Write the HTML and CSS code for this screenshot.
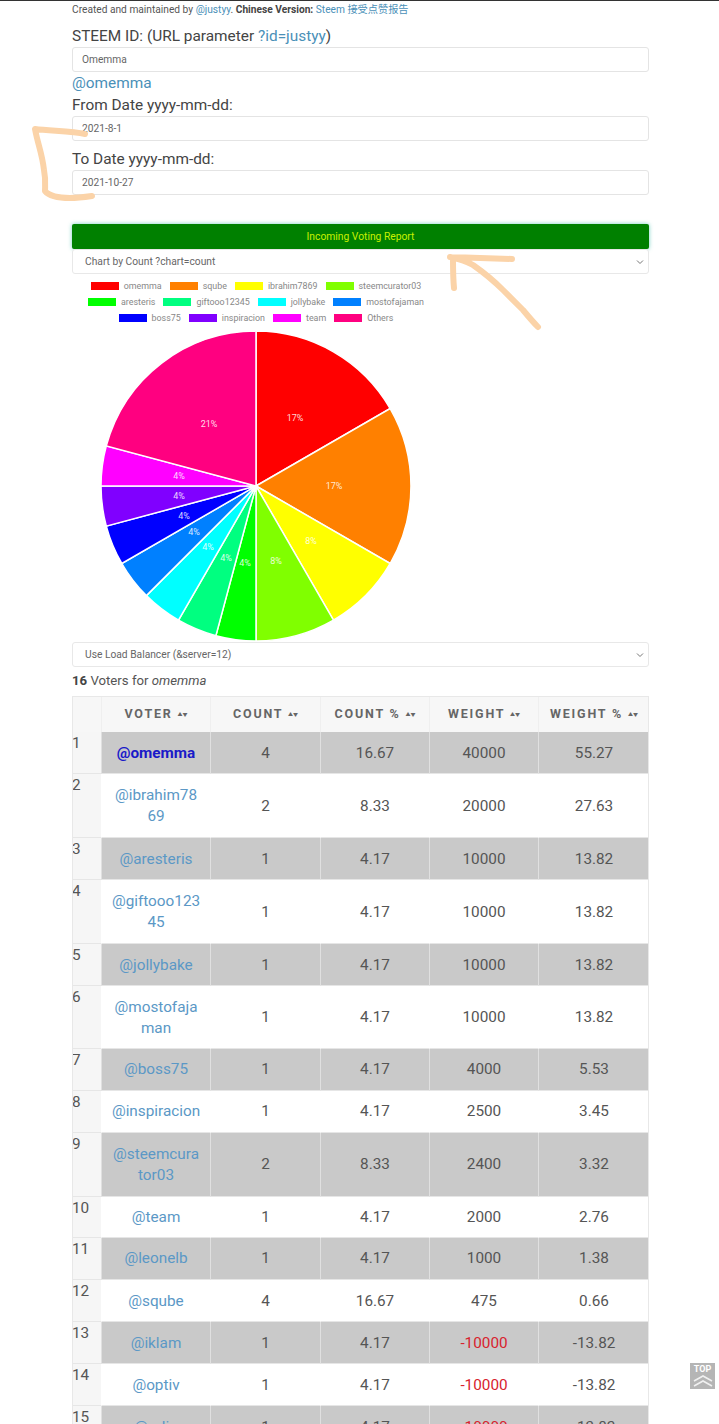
FILE: index.html
```html
<!DOCTYPE html>
<html lang="en">
<head>
    <meta charset="UTF-8">
    <meta name="viewport" content="width=device-width, initial-scale=1.0">
    <title>Steem Incoming Voting Report</title>
    <link rel="stylesheet" href="styles.css">
</head>
<body>
    <div class="page">
        <p class="credit">Created and maintained by <a href="#">@justyy</a>. <b>Chinese Version:</b> <a href="#">Steem 接受点赞报告</a></p>

        <div class="field-label">STEEM ID: (URL parameter <a href="#">?id=justyy</a>)</div>
        <input class="text-input" type="text" value="Omemma">
        <div class="field-label"><a href="#">@omemma</a></div>
        <div class="field-label">From Date yyyy-mm-dd:</div>
        <input class="text-input" type="text" value="2021-8-1">
        <div class="field-label to-date">To Date yyyy-mm-dd:</div>
        <input class="text-input" type="text" value="2021-10-27">

        <button class="report-btn">Incoming Voting Report</button>
        <select class="picker">
            <option>Chart by Count ?chart=count</option>
        </select>

        <div class="chart">
            <div class="legend">
                <div class="legend-row">
                    <span class="legend-item"><i class="swatch" style="background:#ff0000"></i>omemma</span>
                    <span class="legend-item"><i class="swatch" style="background:#ff8000"></i>sqube</span>
                    <span class="legend-item"><i class="swatch" style="background:#ffff00"></i>ibrahim7869</span>
                    <span class="legend-item"><i class="swatch" style="background:#80ff00"></i>steemcurator03</span>
                </div>
                <div class="legend-row">
                    <span class="legend-item"><i class="swatch" style="background:#00ff00"></i>aresteris</span>
                    <span class="legend-item"><i class="swatch" style="background:#00ff80"></i>giftooo12345</span>
                    <span class="legend-item"><i class="swatch" style="background:#00ffff"></i>jollybake</span>
                    <span class="legend-item"><i class="swatch" style="background:#0080ff"></i>mostofajaman</span>
                </div>
                <div class="legend-row">
                    <span class="legend-item"><i class="swatch" style="background:#0000ff"></i>boss75</span>
                    <span class="legend-item"><i class="swatch" style="background:#8000ff"></i>inspiracion</span>
                    <span class="legend-item"><i class="swatch" style="background:#ff00ff"></i>team</span>
                    <span class="legend-item"><i class="swatch" style="background:#ff0080"></i>Others</span>
                </div>
            </div>
            <svg class="pie" width="312" height="312" viewBox="-156 -156 312 312">
                <g stroke="#fff" stroke-width="1.5">
                    <path fill="#ff0000" d="M0 0L0 -155A155 155 0 0 1 134.2 -77.5Z"/>
                    <path fill="#ff8000" d="M0 0L134.2 -77.5A155 155 0 0 1 134.2 77.5Z"/>
                    <path fill="#ffff00" d="M0 0L134.2 77.5A155 155 0 0 1 77.5 134.2Z"/>
                    <path fill="#80ff00" d="M0 0L77.5 134.2A155 155 0 0 1 0 155Z"/>
                    <path fill="#00ff00" d="M0 0L0 155A155 155 0 0 1 -40.1 149.7Z"/>
                    <path fill="#00ff80" d="M0 0L-40.1 149.7A155 155 0 0 1 -77.5 134.2Z"/>
                    <path fill="#00ffff" d="M0 0L-77.5 134.2A155 155 0 0 1 -109.6 109.6Z"/>
                    <path fill="#0080ff" d="M0 0L-109.6 109.6A155 155 0 0 1 -134.2 77.5Z"/>
                    <path fill="#0000ff" d="M0 0L-134.2 77.5A155 155 0 0 1 -149.7 40.1Z"/>
                    <path fill="#8000ff" d="M0 0L-149.7 40.1A155 155 0 0 1 -155 0Z"/>
                    <path fill="#ff00ff" d="M0 0L-155 0A155 155 0 0 1 -149.7 -40.1Z"/>
                    <path fill="#ff0080" d="M0 0L-149.7 -40.1A155 155 0 0 1 0 -155Z"/>
                </g>
                <g class="pie-labels">
                    <text x="39" y="-65">17%</text>
                    <text x="78" y="3">17%</text>
                    <text x="55" y="58">8%</text>
                    <text x="20" y="78">8%</text>
                    <text x="-11" y="80">4%</text>
                    <text x="-30" y="75">4%</text>
                    <text x="-48" y="64">4%</text>
                    <text x="-62" y="49">4%</text>
                    <text x="-72" y="33">4%</text>
                    <text x="-77" y="13">4%</text>
                    <text x="-77" y="-7">4%</text>
                    <text x="-47" y="-59">21%</text>
                </g>
            </svg>
        </div>

        <select class="picker">
            <option>Use Load Balancer (&amp;server=12)</option>
        </select>

        <p class="voters"><b>16</b> Voters for <em>omemma</em></p>

        <table class="report">
            <colgroup>
                <col class="col-rank"><col class="col-voter"><col class="col-count"><col class="col-pct"><col class="col-weight"><col class="col-wpct">
            </colgroup>
            <thead>
                <tr>
                    <th></th>
                    <th>Voter <span class="sort">▲▼</span></th>
                    <th>Count <span class="sort">▲▼</span></th>
                    <th>Count % <span class="sort">▲▼</span></th>
                    <th>Weight <span class="sort">▲▼</span></th>
                    <th>Weight % <span class="sort">▲▼</span></th>
                </tr>
            </thead>
            <tbody>
                <tr><td>1</td><td><a class="self" href="#">@omemma</a></td><td>4</td><td>16.67</td><td>40000</td><td>55.27</td></tr>
                <tr><td>2</td><td><a href="#">@ibrahim7869</a></td><td>2</td><td>8.33</td><td>20000</td><td>27.63</td></tr>
                <tr><td>3</td><td><a href="#">@aresteris</a></td><td>1</td><td>4.17</td><td>10000</td><td>13.82</td></tr>
                <tr><td>4</td><td><a href="#">@giftooo12345</a></td><td>1</td><td>4.17</td><td>10000</td><td>13.82</td></tr>
                <tr><td>5</td><td><a href="#">@jollybake</a></td><td>1</td><td>4.17</td><td>10000</td><td>13.82</td></tr>
                <tr class="tight-two"><td>6</td><td><a href="#">@mostofajaman</a></td><td>1</td><td>4.17</td><td>10000</td><td>13.82</td></tr>
                <tr><td>7</td><td><a href="#">@boss75</a></td><td>1</td><td>4.17</td><td>4000</td><td>5.53</td></tr>
                <tr><td>8</td><td><a href="#">@inspiracion</a></td><td>1</td><td>4.17</td><td>2500</td><td>3.45</td></tr>
                <tr><td>9</td><td><a href="#">@steemcurator03</a></td><td>2</td><td>8.33</td><td>2400</td><td>3.32</td></tr>
                <tr class="tight-one"><td>10</td><td><a href="#">@team</a></td><td>1</td><td>4.17</td><td>2000</td><td>2.76</td></tr>
                <tr><td>11</td><td><a href="#">@leonelb</a></td><td>1</td><td>4.17</td><td>1000</td><td>1.38</td></tr>
                <tr><td>12</td><td><a href="#">@sqube</a></td><td>4</td><td>16.67</td><td>475</td><td>0.66</td></tr>
                <tr><td>13</td><td><a href="#">@iklam</a></td><td>1</td><td>4.17</td><td class="neg">-10000</td><td>-13.82</td></tr>
                <tr><td>14</td><td><a href="#">@optiv</a></td><td>1</td><td>4.17</td><td class="neg">-10000</td><td>-13.82</td></tr>
                <tr><td>15</td><td><a href="#">@odin</a></td><td>1</td><td>4.17</td><td class="neg">-10000</td><td>-13.82</td></tr>
            </tbody>
        </table>
    </div>

    <!-- hand drawn marks on top of the screenshot -->
    <svg class="scribble" width="719" height="1424" viewBox="0 0 719 1424">
        <path d="M85 134C72 131 50 131 35 129C38 145 42 153 44 170C46 180 45 186 45 191C50 197 60 198 70 198C78 198 85 197 92 196"/>
        <path d="M512 259L450 257M453 258C453 268 453 278 454 288M450 257C460 259 466 261 473 265C483 272 493 280 503 290C510 297 517 304 523 310C528 316 533 322 538 327"/>
    </svg>

    <a class="to-top" href="#">
        <span>TOP</span>
        <svg width="20" height="12" viewBox="0 0 20 12">
            <path d="M1 6L10 1L19 6M1 11L10 6L19 11"/>
        </svg>
    </a>
</body>
</html>
```

FILE: styles.css
```css
html, body {
    margin: 0;
    padding: 0;
    height: 1424px;
    overflow: hidden;
}

body {
    background: #fff;
    color: #444;
    font-family: Roboto, "Noto Sans CJK SC", sans-serif;
    border-top: 1px solid #333;
    box-sizing: border-box;
}

a {
    color: #4a90b8;
    text-decoration: none;
}

.page {
    width: 577px;
    margin-left: 72px;
}

.credit {
    margin: 0 0 6px;
    font-size: 10.2px;
    line-height: 18px;
    color: #555;
}

.credit b {
    color: #444;
}

.field-label {
    font-size: 15.4px;
    line-height: 22px;
    color: #444;
}

.to-date {
    margin-top: 7px;
}

.text-input {
    display: block;
    width: 100%;
    height: 25px;
    box-sizing: border-box;
    padding: 0 9px;
    border: 1px solid #e4e4e4;
    border-radius: 3px;
    background: #fff;
    color: #666;
    font-family: inherit;
    font-size: 10.2px;
}

.report-btn {
    display: block;
    width: 100%;
    height: 25px;
    margin-top: 29px;
    padding: 0;
    border: none;
    border-radius: 2px;
    background: #008000;
    color: #c8f000;
    font-family: inherit;
    font-size: 10.3px;
    box-shadow: 0 0 4px rgba(60, 190, 170, 0.7);
}

.picker {
    display: block;
    width: 100%;
    height: 25px;
    box-sizing: border-box;
    margin: 0;
    padding: 0 12px;
    border: 1px solid #e8e8e8;
    border-radius: 3px;
    appearance: none;
    background: #fff url("data:image/svg+xml,%3Csvg xmlns='http://www.w3.org/2000/svg' width='8' height='6'%3E%3Cpath d='M1 1.5L4 4.5L7 1.5' fill='none' stroke='%23777' stroke-width='1'/%3E%3C/svg%3E") no-repeat right 4px center;
    color: #666;
    font-family: inherit;
    font-size: 10.25px;
}

.chart {
    width: 368px;
    padding-top: 4px;
    display: flex;
    flex-direction: column;
    align-items: center;
}

.legend-row {
    display: flex;
    justify-content: center;
    gap: 8px;
    height: 16px;
    align-items: center;
}

.legend-item {
    display: flex;
    align-items: center;
    gap: 5px;
    font-size: 8.9px;
    color: #888;
}

.swatch {
    display: block;
    width: 28px;
    height: 8px;
}

.pie {
    display: block;
    margin-top: 4px;
}

.pie-labels text {
    fill: #fff;
    fill-opacity: 0.85;
    font-size: 9px;
    text-anchor: middle;
}

.voters {
    margin: 5px 0 6px;
    font-size: 13.2px;
    line-height: 18px;
    color: #555;
}

.voters b {
    color: #444;
}

.report {
    width: 577px;
    table-layout: fixed;
    border-collapse: separate;
    border-spacing: 0;
    outline: 1px solid #e8e8e8;
    outline-offset: -1px;
    font-size: 15.3px;
    color: #555;
}

.col-rank { width: 29px; }
.col-voter { width: 109px; }
.col-count { width: 110px; }
.col-pct { width: 109px; }
.col-weight { width: 109px; }
.col-wpct { width: auto; }

.report th {
    height: 36px;
    box-sizing: border-box;
    padding: 0 0 2px;
    background: #f7f7f7;
    border-top: 1px solid #e8e8e8;
    border-left: 1px solid #efefef;
    color: #666;
    font-size: 12.5px;
    font-weight: 700;
    letter-spacing: 1.8px;
    text-transform: uppercase;
    white-space: nowrap;
}

.report th:first-child {
    border-left: none;
}

.sort {
    font-size: 5px;
    letter-spacing: 0;
    vertical-align: 2px;
}

.report td {
    padding: 10.5px 9px 8.6px;
    line-height: 21.93px;
    text-align: center;
    word-break: break-all;
    border-bottom: 1px solid #e6e6e6;
    border-left: 1px solid #e0e0e0;
}

/* the reference rows drift by a pixel here */
.report .tight-two td {
    line-height: 21.4px;
}

.report .tight-one td {
    line-height: 20.9px;
}

.report td:first-child {
    padding: 1px 0 0 0;
    border-left: none;
    background: #f6f6f6;
    text-align: left;
    vertical-align: top;
}

.report tbody tr:nth-child(odd) td:not(:first-child) {
    background: #c9c9c9;
}

.report tbody tr:nth-child(even) td:not(:first-child) {
    border-left-color: #fff;
}

.report a {
    color: #5b98c6;
}

.report a.self {
    color: #1a1ac8;
    font-weight: 700;
}

.report .neg {
    color: #d8232e;
}

.scribble {
    position: absolute;
    top: 0;
    left: 0;
    pointer-events: none;
}

.scribble path {
    fill: none;
    stroke: #fbd3a8;
    stroke-width: 6;
    stroke-linecap: round;
    stroke-linejoin: round;
}

.to-top {
    position: fixed;
    left: 690px;
    top: 1363px;
    width: 25px;
    height: 26px;
    background: #b5b5b5;
    color: #fff;
    display: flex;
    flex-direction: column;
    align-items: center;
    font-size: 9px;
    font-weight: 700;
    line-height: 12px;
}

.to-top svg {
    display: block;
}

.to-top path {
    fill: none;
    stroke: #fff;
    stroke-opacity: 0.8;
    stroke-width: 1.6;
}
```
